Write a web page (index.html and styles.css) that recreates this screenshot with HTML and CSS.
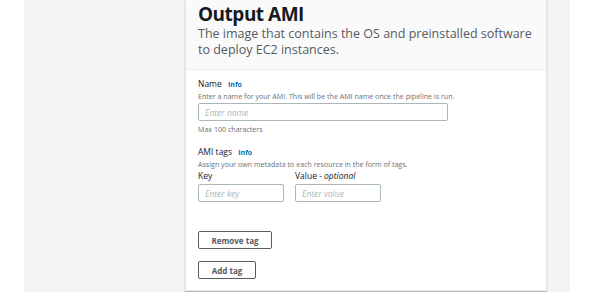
FILE: index.html
```html
<!DOCTYPE html>
<html>
<head>
<meta charset="utf-8">
<link rel="stylesheet" href="styles.css">
</head>
<body>
<div class="page">
  <div class="gutter"></div>
  <main class="main">
    <div class="spacer"></div>
    <section class="card">
      <header class="card-header">
        <h2 class="title">Output AMI</h2>
        <p class="desc">The image that contains the OS and preinstalled software to deploy EC2 instances.</p>
      </header>
      <div class="card-body">
        <div class="field">
          <div class="label">Name <a class="info">Info</a></div>
          <div class="hint">Enter a name for your AMI. This will be the AMI name once the pipeline is run.</div>
          <input class="input input-wide" placeholder="Enter name">
          <div class="hint constraint">Max 100 characters</div>
        </div>
        <div class="field tags">
          <div class="label">AMI tags <a class="info">Info</a></div>
          <div class="hint">Assign your own metadata to each resource in the form of tags.</div>
          <div class="tag-row">
            <div class="tag-col">
              <div class="col-label">Key</div>
              <input class="input input-small" placeholder="Enter key">
            </div>
            <div class="tag-col">
              <div class="col-label">Value - <i>optional</i></div>
              <input class="input input-small" placeholder="Enter value">
            </div>
          </div>
          <button class="btn remove">Remove tag</button>
          <button class="btn add">Add tag</button>
        </div>
      </div>
    </section>
  </main>
</div>
</body>
</html>
```
FILE: styles.css
```css
* { box-sizing: border-box; }
html, body { margin: 0; padding: 0; background: #fff; }
body { width: 595px; height: 292px; overflow: hidden; font-family: "Open Sans", "Noto Sans", sans-serif; color: #16191f; }
.page { display: flex; height: 292px; }
.gutter { width: 24px; flex: none; }
.main { width: 546px; flex: none; background: #f2f3f3; display: flex; }
.spacer { width: 161px; flex: none; }
.card { width: 362px; flex: none; height: 291px; background: #fff; border: 1px solid #e4e7e8; border-top: none; box-shadow: 0 1px 1px rgba(0,28,36,0.25); display: flex; flex-direction: column; }
.card-header { background: #fafafa; border-bottom: 1px solid #eaeded; padding: 2px 4px 0 12px; height: 70px; }
.title { margin: 0; font-size: 19px; line-height: 24px; font-weight: 700; letter-spacing: -0.5px; }
.desc { margin: 0; font-size: 12.5px; line-height: 16px; color: #545b64; }
.card-body { padding: 8px 12px 0 12px; }
.label { font-size: 8.5px; line-height: 12px; }
.info { color: #0073bb; font-weight: 700; font-size: 7px; margin-left: 4px; }
.hint { font-size: 7.1px; line-height: 10px; color: #687078; }
.input { display: block; border: 1px solid #aab7b8; border-radius: 2px; font-family: inherit; font-size: 8.5px; font-style: italic; padding: 0 6px; color: #16191f; background: #fff; outline: none; }
.input::placeholder { color: #aab7b8; }
.input-wide { width: 250px; height: 18px; margin-top: 2px; }
.constraint { margin-top: 3px; }
.tags { margin-top: 12px; }
.tag-row { display: flex; gap: 11px; margin-top: 1px; }
.col-label { font-size: 8.5px; line-height: 12px; margin-bottom: 2px; }
.input-small { width: 86px; height: 18px; }
.btn { display: block; font-family: inherit; font-weight: 700; font-size: 8px; color: #545b64; background: #fff; border: 1px solid #545b64; border-radius: 2px; height: 18px; padding: 0 12px; }
.remove { margin-top: 29px; width: 74px; }
.add { margin-top: 12px; width: 58px; }
```
